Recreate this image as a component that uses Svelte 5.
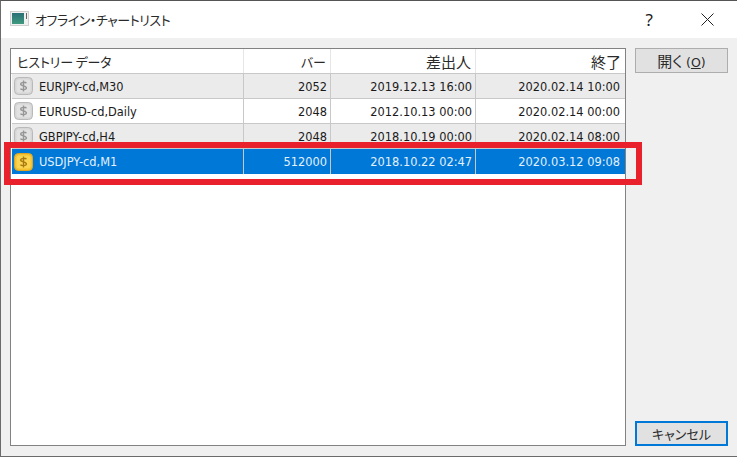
<script lang="ts">
  const rows = [
    { name: "EURJPY-cd,M30", bars: "2052", from: "2019.12.13 16:00", to: "2020.02.14 10:00" },
    { name: "EURUSD-cd,Daily", bars: "2048", from: "2012.10.13 00:00", to: "2020.02.14 00:00" },
    { name: "GBPJPY-cd,H4", bars: "2048", from: "2018.10.19 00:00", to: "2020.02.14 08:00" },
    { name: "USDJPY-cd,M1", bars: "512000", from: "2018.10.22 02:47", to: "2020.03.12 09:08", active: true }
  ];
</script>

<div class="window">
  <div class="titlebar">
    <svg class="app-icon" width="19" height="15" viewBox="0 0 19 15">
      <defs>
        <linearGradient id="screen" x1="0" y1="0" x2="0" y2="1">
          <stop offset="0" stop-color="#2a6f78" />
          <stop offset="1" stop-color="#3f9a7e" />
        </linearGradient>
      </defs>
      <rect x="0.5" y="0.5" width="18" height="14" fill="#f0f0f0" stroke="#cfcfcf" />
      <rect x="2" y="2" width="12" height="11" fill="url(#screen)" />
      <rect x="16" y="2" width="1" height="6" fill="#666" />
    </svg>
    <span class="title">オフライン・チャートリスト</span>
    <span class="help">?</span>
    <svg class="close" width="13" height="13" viewBox="0 0 13 13">
      <path d="M0.5 0.5 L12.5 12.5 M12.5 0.5 L0.5 12.5" stroke="#222" stroke-width="1" fill="none" />
    </svg>
  </div>

  <div class="body">
    <div class="table">
      <div class="row head">
        <div class="cell first">ヒストリー データ</div>
        <div class="cell">バー</div>
        <div class="cell kanji">差出人</div>
        <div class="cell kanji">終了</div>
      </div>
      {#each rows as row, i}
        <div class="row data" class:odd={i % 2 === 0} class:active={row.active}>
          <div class="cell first">
            <svg class="coin" width="19" height="18" viewBox="0 0 19 18">
              <rect x="0.5" y="0.5" width="18" height="17" rx="4" class="coin-bg" />
              <rect x="2.5" y="2.5" width="14" height="13" rx="2.5" class="coin-in" />
              <path d="M12.4 6.2 C11.8 5 6.9 4.8 6.7 7 C6.5 9.1 12.5 8.6 12.4 11 C12.2 13.1 7.1 12.9 6.5 11.6 M9.5 3.6 V14.4" class="coin-s" />
            </svg>
            <span>{row.name}</span>
          </div>
          <div class="cell">{row.bars}</div>
          <div class="cell">{row.from}</div>
          <div class="cell">{row.to}</div>
        </div>
      {/each}
    </div>

    <div class="side">
      <button class="btn open">開く <span class="mnemonic">(<u>O</u>)</span></button>
      <button class="btn default">キャンセル</button>
    </div>
  </div>

  <div class="marker"></div>
</div>

<style>
  :global(body) {
    margin: 0;
    background: #f0f0f0;
  }

  .window {
    position: relative;
    box-sizing: border-box;
    width: 737px;
    height: 457px;
    display: flex;
    flex-direction: column;
    background: #f0f0f0;
    border: 1px solid #6b6b6b;
    border-top-color: #555;
    border-right: none;
    font-family: "DejaVu Sans", sans-serif;
    color: #1a1a1a;
  }

  .titlebar {
    height: 37px;
    flex-shrink: 0;
    display: flex;
    align-items: center;
    background: #fff;
    padding-left: 9px;
  }

  .app-icon {
    margin-right: 6px;
    margin-bottom: 2px;
  }

  .title {
    font-size: 13px;
    flex: 1;
    color: #2a2a2a;
    letter-spacing: -0.45px;
    font-family: "Noto Sans CJK JP", sans-serif;
    font-feature-settings: "palt";
  }

  .help {
    font-size: 17px;
    margin-right: 48px;
    font-family: "Noto Sans", sans-serif;
  }

  .close {
    margin-right: 23px;
  }

  .body {
    flex: 1;
    display: flex;
    padding: 10px 9px 10px 9px;
    gap: 9px;
    min-height: 0;
  }

  .table {
    width: 616px;
    box-sizing: border-box;
    background: #fff;
    border: 1px solid #828282;
  }

  .row {
    display: grid;
    grid-template-columns: 232px 87px 145px 1fr;
    height: 25px;
    box-sizing: border-box;
    margin-left: 1px;
    border-bottom: 1px solid #c8c8c8;
    font-size: 11.4px;
  }

  .row.odd {
    background: #ebebeb;
  }

  .row.data .cell {
    padding-top: 1px;
  }

  .row.head {
    grid-template-columns: 233px 87px 145px 1fr;
    height: 25px;
    margin-left: 0;
    background: #fff;
    color: #2a2a2a;
    font-family: "Noto Sans CJK JP", sans-serif;
    font-feature-settings: "palt";
    font-size: 13px;
  }

  .row.head .cell {
    border-right-color: #e6e6e6;
    padding-right: 4px;
  }

  .row.head .cell.kanji {
    font-size: 15px;
  }

  .row.active {
    background: #0078d7;
    color: #e4f0fa;
    border-bottom: none;
  }

  .cell {
    display: flex;
    align-items: center;
    justify-content: flex-end;
    padding-right: 3px;
    border-right: 1px solid #c8c8c8;
    white-space: nowrap;
    overflow: hidden;
  }

  .cell:last-child {
    border-right: none;
    padding-right: 5px;
  }

  .cell.first {
    justify-content: flex-start;
    padding-left: 2px;
    gap: 6px;
  }

  .row.head .cell.first {
    padding-left: 6px;
    letter-spacing: -0.2px;
  }

  .coin {
    flex-shrink: 0;
    margin-top: -1px;
  }

  .coin-bg {
    fill: #d6d6d6;
    stroke: #b9b9b9;
  }

  .coin-in {
    fill: #e2e2e2;
  }

  .coin-s {
    fill: none;
    stroke: #969696;
    stroke-width: 1.4;
  }

  .row.active .coin-bg {
    fill: #f2c230;
    stroke: #e0a51c;
  }

  .row.active .coin-in {
    fill: #fad453;
  }

  .row.active .coin-s {
    stroke: #a87a10;
  }

  .side {
    flex: 1;
    display: flex;
    flex-direction: column;
    justify-content: space-between;
  }

  .btn {
    height: 25px;
    box-sizing: border-box;
    background: #e1e1e1;
    border: 1px solid #adadad;
    font-family: "Noto Sans CJK JP", sans-serif;
    font-feature-settings: "palt";
    font-size: 13px;
    color: #2a2a2a;
    padding: 0;
  }

  .btn.open {
    font-size: 15px;
  }

  .mnemonic {
    font-family: "DejaVu Sans", sans-serif;
    font-size: 12.5px;
  }

  .btn.default {
    border: 2px solid #0078d7;
  }

  .marker {
    position: absolute;
    left: 3px;
    top: 141px;
    width: 638px;
    height: 43px;
    box-sizing: border-box;
    border: 6px solid #e9212d;
    pointer-events: none;
  }
</style>
